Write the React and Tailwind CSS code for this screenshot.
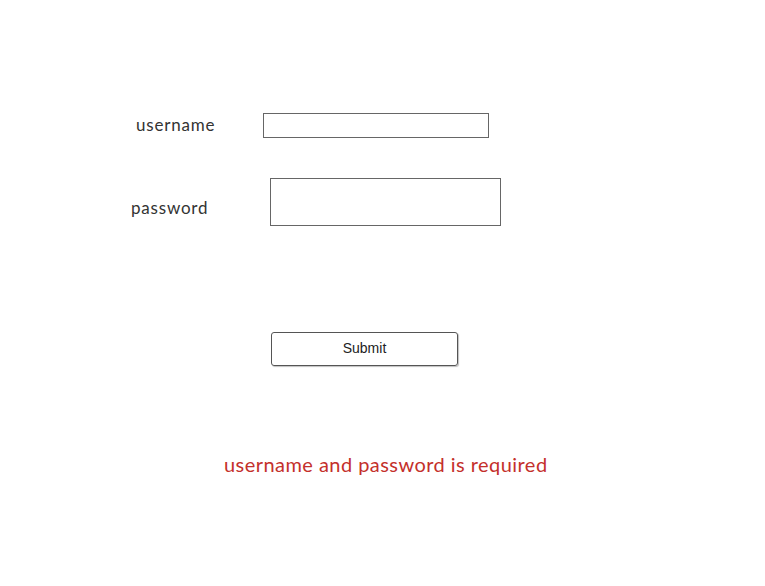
import React from "react";

export default function App() {
  return (
    <div className="w-[765px] h-[586px] bg-white overflow-hidden" style={{ fontFamily: "Lato, 'Noto Sans', sans-serif" }}>
      <div className="pt-[113px]">
        <div className="flex items-center h-[25px]">
          <div className="ml-[136px] w-[127px] -mt-[3px] text-[17px] text-[#333] leading-none tracking-[0.8px]">username</div>
          <div className="w-[226px] h-[25px] border border-[#666] bg-white" />
        </div>
        <div className="flex items-start mt-[40px]">
          <div className="ml-[131px] w-[139px] mt-[21px] text-[17px] text-[#333] leading-none tracking-[0.8px]">password</div>
          <div className="w-[231px] h-[48px] border border-[#666] bg-white" />
        </div>
        <div className="ml-[271px] mt-[106px] w-[187px] h-[34px] border border-[#555] rounded-[3px] shadow-[1px_1px_1px_rgba(0,0,0,0.25)] flex items-center justify-center text-[14px] text-[#222] pb-[2px]" style={{ fontFamily: "'Liberation Sans', Arial, sans-serif" }}>
          Submit
        </div>
        <div className="ml-[224px] mt-[88px] text-[20px] leading-none text-[#c4302b] tracking-[0.45px]">
          username and password is required
        </div>
      </div>
    </div>
  );
}
